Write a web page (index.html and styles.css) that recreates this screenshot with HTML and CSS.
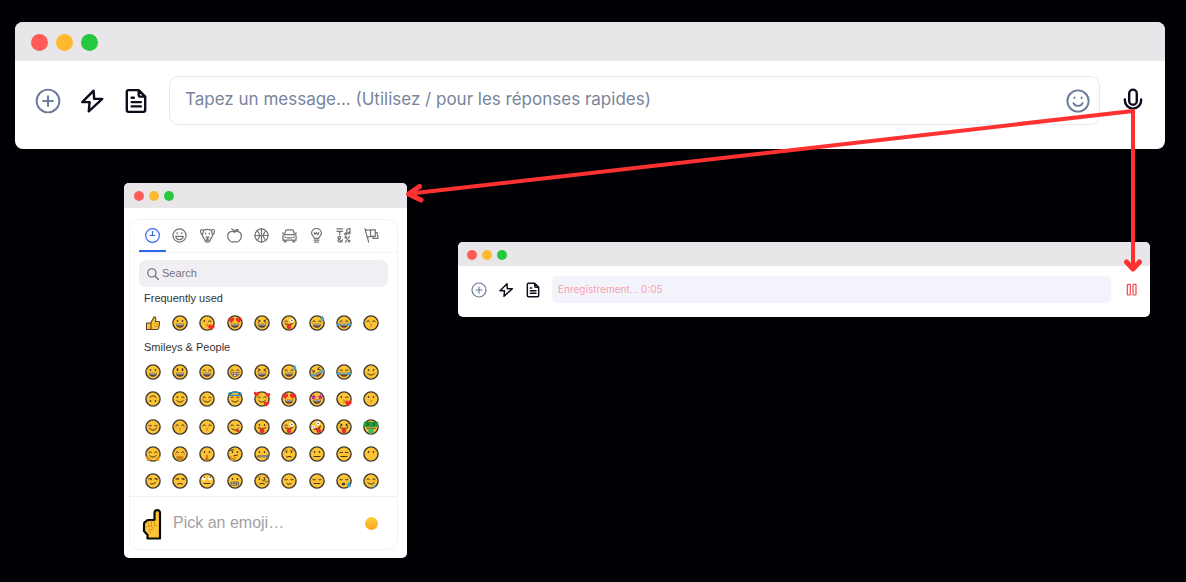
FILE: index.html
```html
<!DOCTYPE html>
<html lang="fr">
<head>
<meta charset="utf-8">
<meta name="viewport" content="width=device-width, initial-scale=1">
<title>Messagerie</title>
<link rel="stylesheet" href="styles.css">
</head>
<body>
<svg class="defs" aria-hidden="true">
  <symbol id="i-plus" viewBox="0 0 24 24"><circle cx="12" cy="12" r="10.5"/><path d="M12 7.5v9M7.5 12h9"/></symbol>
  <symbol id="i-bolt" viewBox="0 0 24 24"><path d="M13.500 2.500 3 13h6.800L9 21.500 21.500 10H14z"/></symbol>
  <symbol id="i-doc" viewBox="0 0 24 24"><path d="M14.500 2H5.200Q3.500 2 3.500 3.700V20.300Q3.500 22 5.200 22H18.800Q20.500 22 20.500 20.300V8zM14.500 2v4.500Q14.500 8 16 8h4.500M8 9h2M8 13h8.500M8 17h8.500"/></symbol>
</svg>
<main class="desktop">
  <section class="window window-large">
    <header class="titlebar"><span class="light red"></span><span class="light amber"></span><span class="light green"></span></header>
    <form class="composer">
      <button type="button" class="icon-btn muted" aria-label="Ajouter"><svg><use href="#i-plus"/></svg></button>
      <button type="button" class="icon-btn" aria-label="Réponses rapides"><svg><use href="#i-bolt"/></svg></button>
      <button type="button" class="icon-btn" aria-label="Modèles"><svg><use href="#i-doc"/></svg></button>
      <div class="field">
        <input type="text" aria-label="Message" placeholder="Tapez un message... (Utilisez / pour les réponses rapides)">
        <button type="button" class="icon-btn muted" aria-label="Emoji"><svg viewBox="0 0 24 24"><circle cx="12" cy="12" r="9.800"/><path d="M7.800 14q1.500 2.500 4.200 2.500t4.200-2.500M8.700 8.700v.6M15.300 8.700v.6"/></svg></button>
      </div>
      <button type="button" class="icon-btn mic" aria-label="Enregistrer"><svg viewBox="0 0 24 24"><rect x="8.500" y="1.500" width="7" height="14" rx="3.500"/><path d="M4.500 10.500v1a7.500 7.500 0 0 0 15 0v-1M12 19v4"/></svg></button>
    </form>
  </section>

  <div class="lower">
    <section class="window window-picker">
      <header class="titlebar"><span class="light red"></span><span class="light amber"></span><span class="light green"></span></header>
      <div class="picker-body">
        <div class="picker">
          <nav class="tabs" aria-label="Catégories">
            <button type="button" class="tab active" aria-label="Recent"><svg viewBox="0 0 16 16"><circle cx="8" cy="8" r="7.300"/><path d="M8 3.500V8M5.500 8h5"/></svg></button>
            <button type="button" class="tab" aria-label="Smileys"><svg viewBox="0 0 16 16"><circle cx="8" cy="8" r="7"/><path d="M5.500 5v1M10.500 5v1M4 9h8q-.5 3.500-4 3.500T4 9z"/></svg></button>
            <button type="button" class="tab" aria-label="Animals"><svg viewBox="0 0 16 16"><path d="M4 2.500Q1 .5.700 3T2.500 7.500L4 2.500Q8 .5 12 2.500l1.500 5Q15.600 5.500 15.300 3T12 2.500M2.500 7.500Q3 10 5 12q0 3 3 3.200 3-.2 3-3.200 2-2 2.500-4.500M6 5.500v1M10 5.500v1"/><path class="solid" d="M5.500 9h5L9 11v1.300l1.400.5-2.400 1.700-2.400-1.700 1.400-.5V11z"/></svg></button>
            <button type="button" class="tab" aria-label="Food"><svg viewBox="0 0 16 16"><path d="M8 4.500C5 2.800.700 4 .700 8.500S4.500 15 6 15q1-.4 2-.4t2 .4c1.500 0 5.300-2 5.300-6.500S11 2.800 8 4.500zM8 4.500Q7.500 2 5 1M8 4Q8.500 1.500 12 1.500 11.500 4 8 4"/></svg></button>
            <button type="button" class="tab" aria-label="Activities"><svg viewBox="0 0 16 16"><circle cx="8" cy="8" r="7"/><path d="M1 8h14M8 1v14M3.500 3Q8.500 8 3.500 13M12.500 3Q7.500 8 12.500 13"/></svg></button>
            <button type="button" class="tab" aria-label="Travel"><svg viewBox="0 0 16 16"><path d="M2.500 7 4.300 2h7.400l1.800 5M1 8.500Q1 7 2.500 7h11Q15 7 15 8.500V13H1zM2.500 13v1.700h2V13M11.500 13v1.700h2V13M5.500 10.500h5M3 9.800h1M12 9.800h1M.5 5.500h1M14.500 5.500h1"/></svg></button>
            <button type="button" class="tab" aria-label="Objects"><svg viewBox="0 0 16 16"><path d="M5.500 11Q5.500 9.500 4 8.300A5 5 0 0 1 2.700 5.500a5.300 5 0 0 1 10.600 0A5 5 0 0 1 12 8.300Q10.500 9.500 10.500 11zM5.500 13h5M6 15h4M5.500 5l1 2 1.500-2 1.500 2 1-2"/></svg></button>
            <button type="button" class="tab" aria-label="Symbols"><svg viewBox="0 0 16 16"><path d="M1 1h6M1 3.500h6M4 3.500v3.500M11.500 6V1.500l3.500-1V5M6.500 15 2 10.500q0-1.500 1.500-1.500T5 10.500L2 13q0 2 2 2t3-2.500M10 15l4.500-6"/><circle cx="10.300" cy="6.300" r="1"/><circle cx="13.800" cy="5.300" r="1"/><circle cx="10.500" cy="10" r=".8"/><circle cx="14" cy="14" r=".8"/></svg></button>
            <button type="button" class="tab" aria-label="Flags"><svg viewBox="0 0 16 16"><path d="M1 1l4 14M1.500 1.500Q4 3 7 2v7Q5 10 3.500 9M7 2h5v7H7M12 5h2l1 6H9.500V9"/></svg></button>
          </nav>
          <label class="search"><svg viewBox="0 0 16 16"><circle cx="6.500" cy="6.500" r="5.500"/><path d="m10.500 10.500 4.500 4.500"/></svg><input type="search" placeholder="Search" aria-label="Search"></label>
          <h2>Frequently used</h2>
          <div class="emoji-grid" data-set="frequent"></div>
          <h2>Smileys &amp; People</h2>
          <div class="emoji-grid" data-set="people"></div>
          <footer class="preview">
            <svg class="hand" viewBox="0 0 20 31"><path d="M12.500 11V3.500Q13 1.200 15.200 1.200T18 3.500V29.500H5.500V26L2 22V15.500Q2 13 4 12.500q.5-1.500 2.500-1.500z"/><path class="crease" d="M6.500 12.500v4M9.500 12v4.500M12.500 12v4.500M4 18q4-2 6 0 2 1 0 2.500H7q2 2 1.500 3.500M12.500 16.500h2"/></svg>
            <span class="preview-text">Pick an emoji…</span>
            <button type="button" class="tone" aria-label="Skin tone"></button>
          </footer>
        </div>
      </div>
    </section>

    <section class="window window-recorder">
      <header class="titlebar"><span class="light red"></span><span class="light amber"></span><span class="light green"></span></header>
      <form class="composer">
        <button type="button" class="icon-btn muted" aria-label="Ajouter"><svg><use href="#i-plus"/></svg></button>
        <button type="button" class="icon-btn" aria-label="Réponses rapides"><svg><use href="#i-bolt"/></svg></button>
        <button type="button" class="icon-btn" aria-label="Modèles"><svg><use href="#i-doc"/></svg></button>
        <div class="field recording"><input type="text" aria-label="Message" placeholder="Enregistrement... 0:05"></div>
        <button type="button" class="icon-btn pause" aria-label="Pause"><svg viewBox="0 0 24 24"><rect x="5" y="3.500" width="4.500" height="16" rx="1"/><rect x="13.500" y="3.500" width="4.500" height="16" rx="1"/></svg></button>
      </form>
    </section>
  </div>
  <svg class="arrows" viewBox="0 0 1186 582" aria-hidden="true"><path d="M1133 267V111L411 193.500"/><path class="head" d="M419.500 186.500 408.500 194l12.500 6M1126.500 262l6.500 7 6.500-7"/></svg>
</main>
<script src="emoji.js"></script>
</body>
</html>
```
FILE: styles.css
```css
* { box-sizing: border-box; }
body { margin: 0; background: #010005; font-family: "Liberation Sans", Arial, sans-serif; }
button, input { margin: 0; padding: 0; border: 0; background: none; font: inherit; color: inherit; outline: 0; }
svg { display: block; fill: none; stroke: currentColor; stroke-linecap: round; stroke-linejoin: round; }
.defs { position: absolute; width: 0; height: 0; }
.desktop { position: relative; min-height: 100vh; padding: 22px 21px 24px 15px; }

.window { background: #fff; border-radius: 5px; overflow: hidden; }
.window-large { border-radius: 8px; }
.titlebar { display: flex; align-items: center; gap: 5px; height: 25px; padding: 0 10px; background: #e8e6e9; }
.light { width: 10px; height: 10px; border-radius: 50%; }
.red { background: #ff5c57; }
.amber { background: #ffb92e; }
.green { background: #26c840; }
.window-large .titlebar { height: 39px; gap: 8px; padding: 2px 16px 0; }
.window-large .light { width: 17px; height: 17px; }

.composer { display: flex; align-items: center; gap: 18px; padding: 15px 19px 24px 20px; }
.icon-btn { flex: none; color: #0c0c1c; }
.icon-btn svg { width: 26px; height: 26px; stroke-width: 2.2; }
.field { flex: 1; display: flex; align-items: center; height: 49px; margin: 0 2px 0 2px; padding: 0 8px 0 15px; border: 1px solid #e6e9f5; border-radius: 9px; }
.field input { flex: 1; min-width: 0; height: 44px; padding-bottom: 4px; font-family: Inter, sans-serif; font-size: 17px; }
.field input::placeholder { color: #77849c; opacity: 1; }
.muted { color: #6b7c9b; }
.muted svg { stroke-width: 1.8; }

.lower { display: flex; align-items: flex-start; gap: 51px; margin: 34px 15px 0 109px; }
.window-picker { flex: none; width: 283px; }
.window-recorder { flex: 1; margin-top: 59px; }

.picker-body { padding: 11px 9px 8px 5px; }
.picker { border: 1px solid #f3f1f5; border-radius: 10px; }
.tabs { display: grid; grid-template-columns: repeat(9, 1fr); padding: 0 12px 0 9px; border-bottom: 1px solid #f5f4f6; }
.tab { display: grid; place-items: center; height: 32px; border-bottom: 2px solid transparent; color: #737373; }
.tab svg { width: 15px; height: 15px; margin-top: 1px; stroke-width: 1.3; }
.tab .solid { fill: currentColor; stroke: none; }
.tab.active { color: #2f66f0; border-color: #2f66f0; }
.search { display: flex; align-items: center; gap: 3px; height: 27px; margin: 7px 9px 0; padding-left: 8px; border-radius: 7px; background: #f1eff3; color: #66646a; }
.search svg { width: 12px; height: 12px; stroke-width: 1.6; }
.search input { flex: 1; min-width: 0; height: 20px; padding-bottom: 1px; font-size: 11px; }
.search input::placeholder { color: #77757a; opacity: 1; }
.picker h2 { margin: 0 14px; font-size: 11px; font-weight: 400; line-height: 22px; color: #333; }
.emoji-grid { display: grid; grid-template-columns: repeat(9, 1fr); padding: 0 12px 0 9px; }
.emoji { display: grid; place-items: center; aspect-ratio: 1; }
.emoji svg { width: 16px; height: 16px; }
.preview { display: flex; align-items: center; height: 53px; margin-top: 1px; padding: 0 19px 0 12px; border-top: 1px solid #f3f1f5; }
.hand { width: 20px; height: 31px; margin-top: 3px; fill: #fcc537; stroke: #0b0b08; stroke-width: 2.2; }
.hand .crease { fill: none; stroke: #d99520; stroke-width: 1; }
.preview-text { flex: 1; margin-left: 11px; font-size: 16px; color: #a3a1a4; }
.tone { width: 13px; height: 13px; border-radius: 50%; background: linear-gradient(#ffce3a, #fda820); }

.window-recorder .titlebar { height: 24px; padding: 1px 9px 0; }
.window-recorder .composer { gap: 11px; padding: 10px 10px 14px 13px; }
.window-recorder .icon-btn svg { width: 16px; height: 16px; }
.window-recorder .recording { height: 27px; margin: 0 2px 0 0; padding: 0 6px; border: 0; border-radius: 5px; background: #f3f3fc; }
.recording input { height: 24px; padding: 0 0 1px; font-size: 10px; }
.recording input::placeholder { color: #f8a1ac; }
.window-recorder .pause { color: #f5444b; }
.window-recorder .pause svg { stroke-width: 1.8; }
.arrows { position: absolute; top: 0; left: 0; width: 100%; pointer-events: none; stroke: #ff3131; stroke-width: 4; }
.arrows .head { stroke-width: 5; }
```
FILE: emoji.js
```js
const INK = '#49362a';
const line = (d, color = INK, w = 1) => `<path d="${d}" stroke="${color}" stroke-width="${w}"/>`;
const fill = (d, color) => `<path d="${d}" fill="${color}" stroke="none"/>`;
const dot = (x, y, r, color, ry = r) => `<ellipse cx="${x}" cy="${y}" rx="${r}" ry="${ry}" fill="${color}" stroke="none"/>`;
const heart = (x, y, s = 1, color = '#ee3029') =>
  `<g transform="translate(${x} ${y}) scale(${s})">${fill('M0 2.500-2.300.2Q-3-1.500-1.500-2-.5-2.200 0-1.200.5-2.200 1.500-2 3-1.500 2.300.2z', color)}</g>`;
const star = x => fill(`M${x} 3l.9 1.900 2 .2-1.400 1.500.4 2-1.900-.9-1.900.9.4-2-1.400-1.500 2-.2z`, '#cf2494');

const parts = {
  face: dot(8, 8, 7, '#fcc433') + '<circle cx="8" cy="8" r="7.100" stroke="#40382f" stroke-width="1.400"/>',
  dots: dot(5.5, 6, .8, INK, 1) + dot(10.5, 6, .8, INK, 1),
  tall: dot(5.5, 5.7, .8, INK, 1.6) + dot(10.5, 5.7, .8, INK, 1.6),
  arcs: line('M3.800 6.500Q5.200 4.700 6.500 6.500M9.500 6.500Q10.800 4.700 12.200 6.500'),
  lids: line('M3.800 6.500Q5.200 7.800 6.500 6.500M9.500 6.500Q10.800 7.800 12.200 6.500'),
  flats: line('M4 6.500h2.500M9.500 6.500H12'),
  squint: line('M4 4.800l2.300 1.200L4 7.300M12 4.800 9.700 6 12 7.300'),
  wink: dot(5.3, 6, .8, INK, 1) + line('M9.500 6.300Q10.800 5.300 12 6.300'),
  bigwink: line('M3.800 6.500Q5.200 4.700 6.500 6.500') + dot(10.8, 5.5, 2, '#fff') + dot(10.8, 5.5, .7, INK),
  zanyeyes: dot(4.8, 6.5, 1.7, '#fff') + dot(10.5, 5.2, 2, '#fff') + dot(4.8, 6.5, .6, INK) + dot(10.5, 5.2, .7, INK),
  hearts: heart(4.2, 5, 1.2) + heart(11.8, 5, 1.2),
  stars: star(4.6) + star(11.4),
  roll: dot(5, 5.5, 1.9, '#fff') + dot(11, 5.5, 1.9, '#fff') + dot(5.3, 4.3, .7, INK) + dot(11.3, 4.3, .7, INK),
  side: line('M3.800 5.800h2.700M9.500 5.800h2.700') + dot(6, 6.5, .7, INK) + dot(11.7, 6.5, .7, INK),
  brow: line('M3.800 4.500l2.500-.8M9.500 4.500H12', '#9b6b20', .8),
  open: fill('M3.800 8.700h8.400q-.3 4-4.200 4t-4.200-4z', '#51433a') + fill('M4.200 9h7.600l-.4 1.600H4.600z', '#a6a39c') + dot(8, 12, 1.3, '#c4483c', .5),
  teeth: fill('M3.800 8.700h8.400q-.3 3.800-4.200 3.800t-4.200-3.800z', '#e8e6df') + line('M3.800 8.700h8.400q-.3 3.800-4.200 3.800t-4.200-3.800zM5 10.400h6M6.500 9v3M9.500 9v3', INK, .6),
  tongue: line('M4.200 8.800Q8 10.500 11.800 8.800') + fill('M5.800 9.400h4.400v3.800q-2.200 2.300-4.400 0z', '#e83328'),
  smile: line('M4.700 9.500Q8 13 11.300 9.500'),
  tiny: line('M6 10.700Q8 12 10 10.700'),
  flat: line('M5 10.500h6'),
  frown: line('M5.500 11Q8 9.500 10.500 11'),
  smirk: line('M5.500 11Q9 11.500 10.800 9.500'),
  kiss: line('M7.700 9Q9.300 9.500 8 10.300 9.300 11 7.700 11.700', '#ad6a1c', .8),
  grimace: fill('M4.500 9h7v3.200h-7z', '#e4e1d9') + line('M4.500 9h7v3.200h-7zM4.500 10.600h7M7 9v3M9.300 9v3', INK, .6),
  zip: line('M4.200 10.200h9.500', '#66635f', 2) + line('M5 10.200h8', '#bbb', .6) + dot(13.5, 12, 1.5, '#77736f'),
  cry: dot(7.5, 11, 1.8, INK, 1.2),
  blush: dot(4, 8.7, 1.3, '#f59a58', .9) + dot(12, 8.7, 1.3, '#f59a58', .9),
  drop: fill('M13.500.5Q16 4.500 15 5.500 12 6.500 11.700 4.200z', '#35aae2'),
  tears: dot(2.7, 9.5, 1.7, '#35b3e7', 1.6) + dot(13.3, 9.5, 1.7, '#35b3e7', 1.6),
  tear: fill('M12 8.500q4 3.500 2.500 5.500-3.500.8-3.500-2z', '#35aae2'),
  drool: fill('M10.500 10.500q2.500 3 1.300 4-2.500.5-2.300-1.500z', '#5ebfe9'),
  halo: '<ellipse cx="8" cy="2.800" rx="6.500" ry="1.600" stroke="#2b91bc" stroke-width="1.400"/>',
  lips: heart(12.4, 12.2, 1.3),
  love: heart(2.6, 3, 1.1) + heart(14, 4, 1) + heart(12.5, 12.7, 1.1),
  lick: dot(10.8, 11.7, 1.8, '#e5372b', 1.3),
  hug: fill('M1 10.500q2-1 3.500 1.500L5 15H2zM15 10.500q-2-1-3.500 1.500L11 15h3z', '#e79b22') + line('M3 11l1.500 2.500M13 11l-1.500 2.500', '#a6691d', .6),
  palm: fill('M4 10.300Q8 9 12 11l-1 3-5 1z', '#d98c20') + line('M5 11.300h5M5.500 12.800h4', '#a6691d', .5),
  finger: fill('M7 9h2v3l1.500 1-1 2H6l-1-2 2-1z', '#c8791c'),
  chin: fill('M2.500 10h2v2l4.500-1v1.500L6.500 15H4z', '#d68d22') + line('M7 9.800l3.500-.8M3.500 4.500l3-.8'),
  nose: fill('M8 7l7.500 2v1.500L8 9.500z', '#e8ad2a') + line('M8 7l7 2.200', INK, .6),
  cash: fill('M.8 2.800h14.400v5H.8z', '#239b3b') + line('M5.800 3.500Q3.300 4 5 5.200t-1 1.800M11.800 3.500Q9.300 4 11 5.200t-1 1.800', '#0e5a25', .9) + line('M3.800 9.200h8.400') + fill('M5.300 9.500h5.400v4q-2.700 2.500-5.400 0z', '#3fbe58')
};

const faces = {
  frequent: ['thumb', 'dots open', 'wink kiss lips', 'hearts open', 'squint open', 'bigwink tongue', 'arcs open drop', 'arcs open tears', 'arcs kiss'],
  people: [
    'dots open', 'tall open', 'arcs open', 'arcs teeth', 'squint open', 'arcs open drop', 'tilt squint open tears', 'arcs open tears', 'dots smile',
    'flip dots smile', 'wink smile', 'arcs blush smile', 'arcs smile halo', 'arcs smile love', 'hearts open', 'stars open', 'wink kiss lips', 'dots kiss',
    'lids blush smile', 'arcs blush kiss', 'arcs kiss', 'arcs smile lick', 'dots tongue', 'bigwink tongue', 'tilt zanyeyes tongue', 'squint tongue', 'cash',
    'arcs smile hug', 'arcs blush palm', 'dots finger', 'dots chin', 'dots zip', 'dots brow frown', 'dots flat', 'flats flat', 'dots',
    'side smirk', 'side frown', 'roll flat', 'dots grimace', 'dots brow frown nose', 'lids tiny', 'lids flat', 'lids cry tear', 'arcs smile drool'
  ]
};

const thumb = '<path d="M6 7.500 9 2Q11 1.500 10.800 4L10.300 6.500H14Q15 7 14.500 8.500L13.700 13.500Q13.500 14.500 12 14.500H6zM1.500 8H6v6.500H1.500z" fill="#fcc433" stroke="#57432d" stroke-width="1.100"/><path d="M10 9h4M10 11.500h3.500" stroke="#c18523" stroke-width=".7"/>';

function draw(spec) {
  if (spec === 'thumb') return thumb;
  const names = spec.split(' ');
  const inner = names.map(n => parts[n] || '').join('');
  const turn = names[0] === 'flip' ? 180 : names[0] === 'tilt' ? -25 : 0;
  return `${parts.face}<g transform="rotate(${turn} 8 8)">${inner}</g>`;
}

document.querySelectorAll('.emoji-grid').forEach(grid => {
  grid.innerHTML = faces[grid.dataset.set].map((spec, i) =>
    `<button type="button" class="emoji" aria-label="Emoji ${i + 1}"><svg viewBox="0 0 16 16">${draw(spec)}</svg></button>`).join('');
});
```
